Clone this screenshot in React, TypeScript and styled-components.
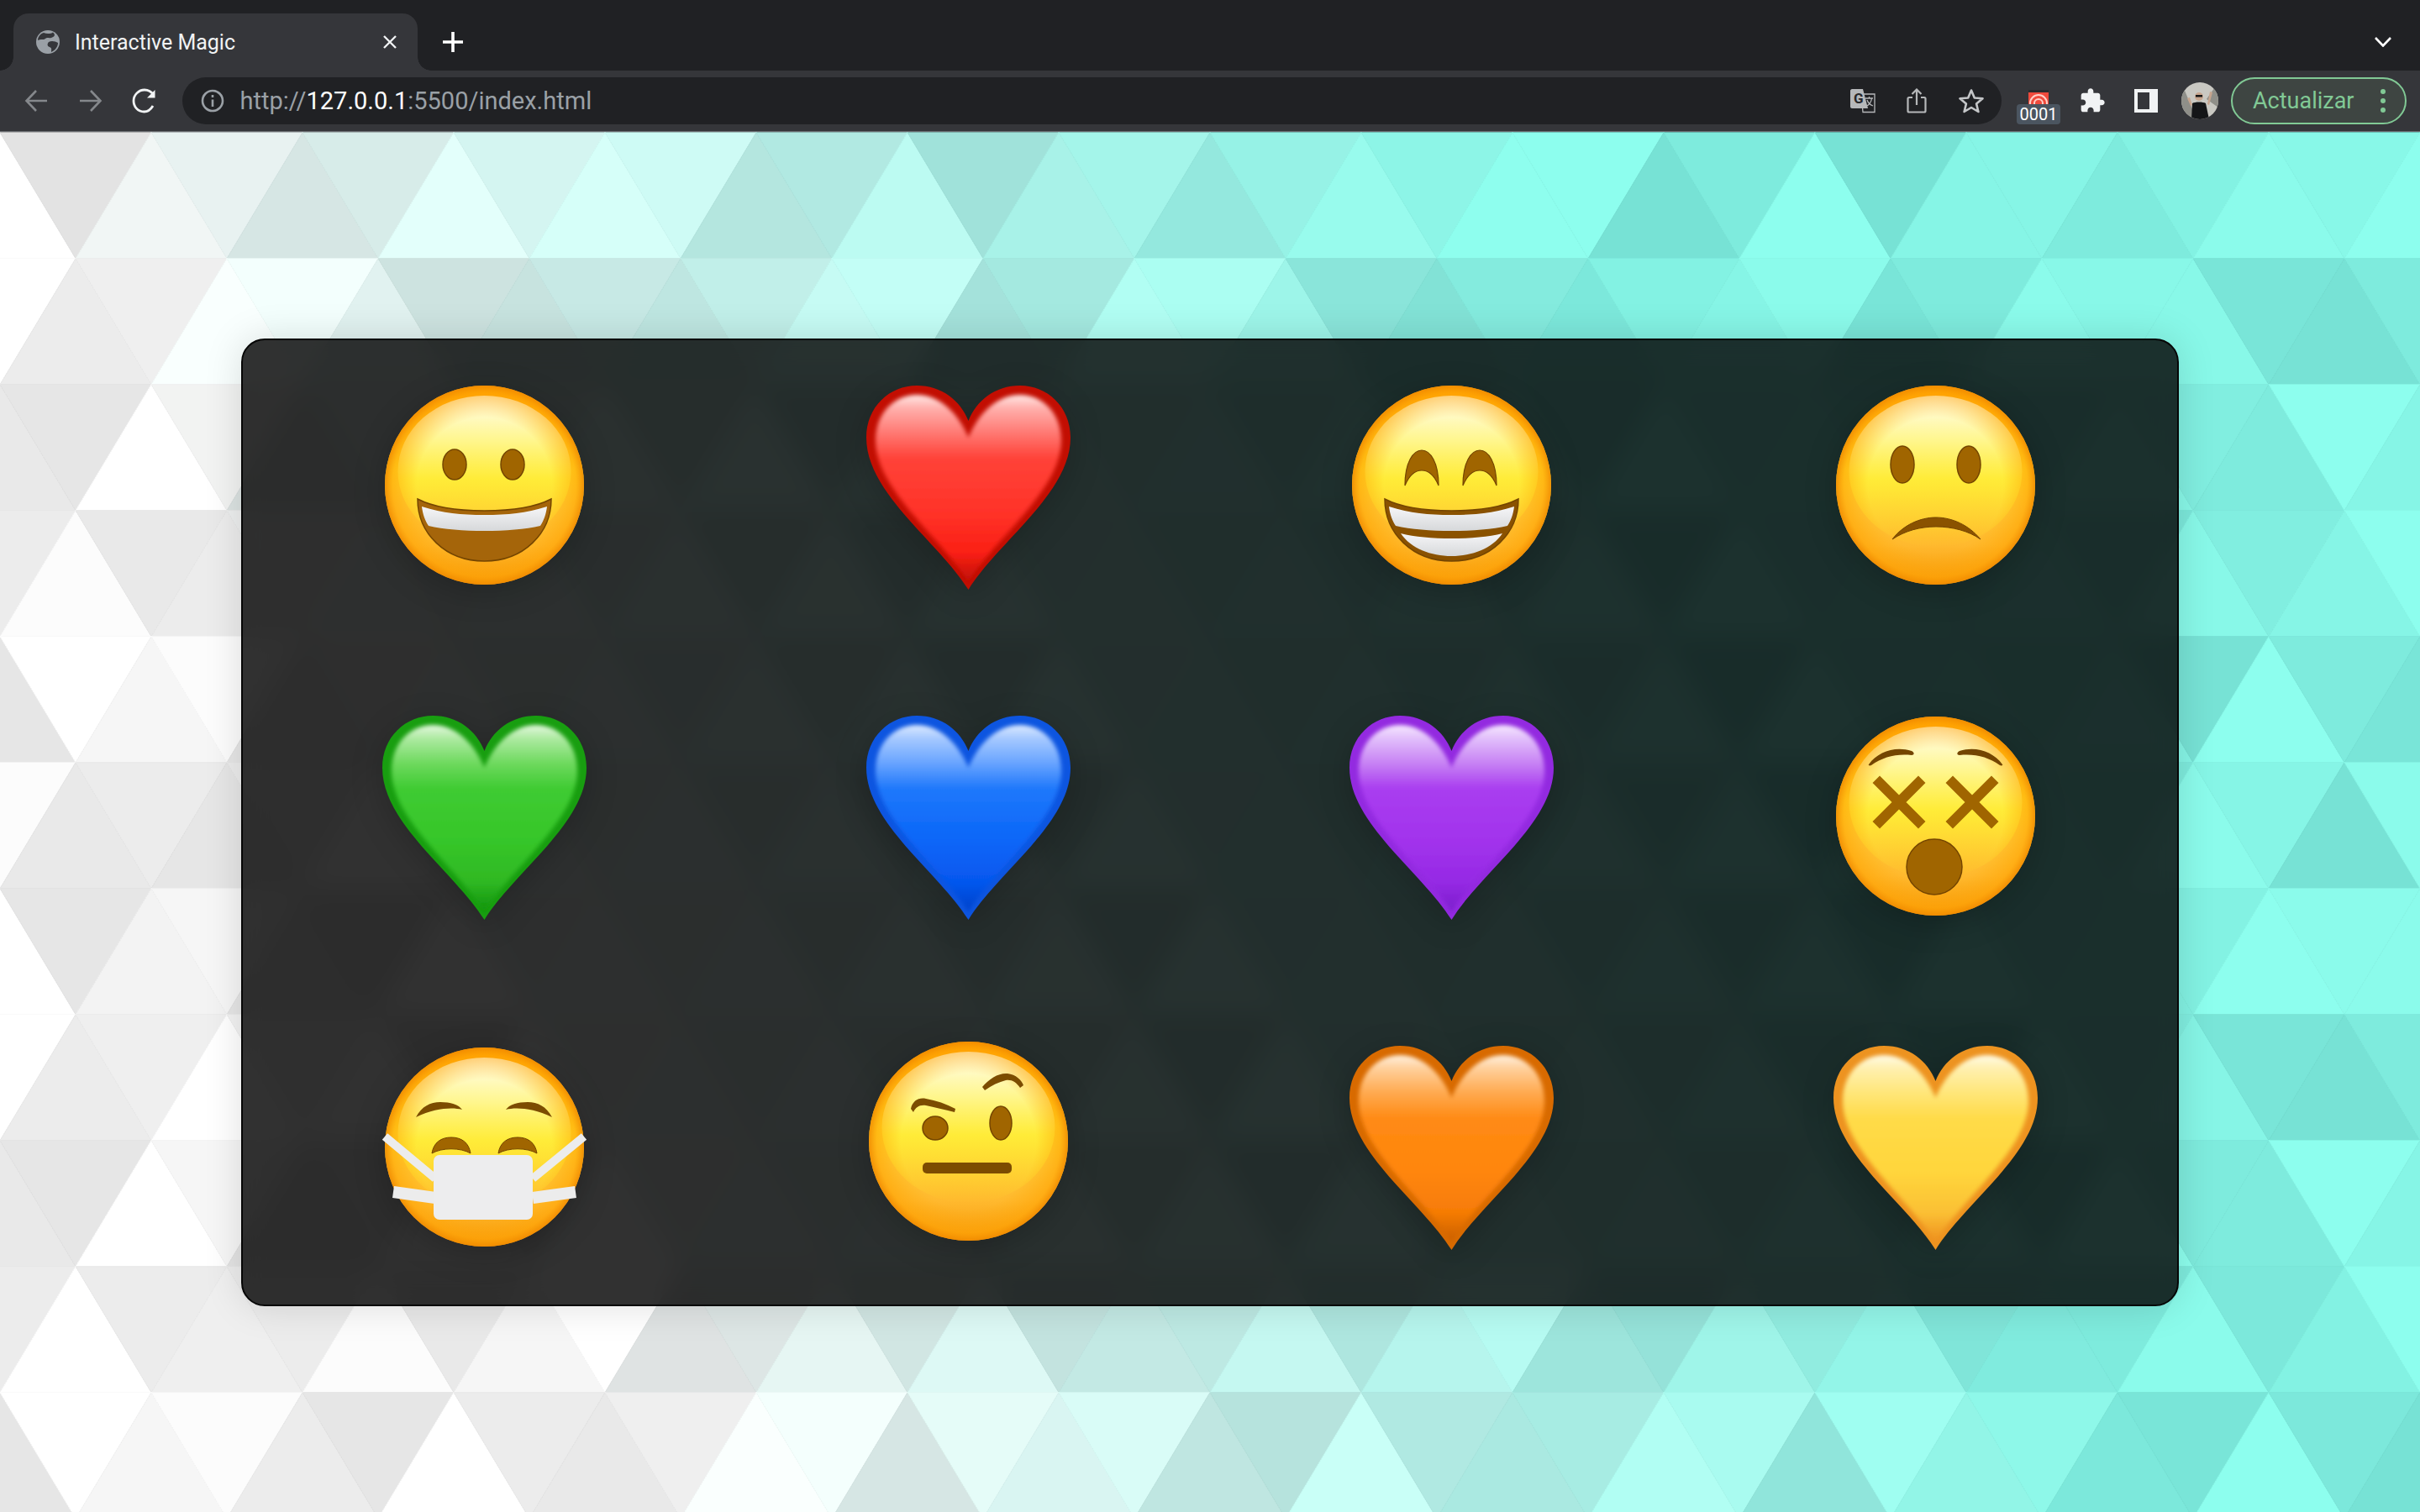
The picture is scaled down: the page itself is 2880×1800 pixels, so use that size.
import React, { useMemo } from 'react';
import styled, { createGlobalStyle } from 'styled-components';

const GlobalStyle = createGlobalStyle`
  html, body, #root {
    margin: 0;
    height: 100%;
  }
  body {
    font-family: Roboto, 'Liberation Sans', sans-serif;
    overflow: hidden;
    background: #202124;
  }
`;

const Page = styled.div`
  display: flex;
  flex-direction: column;
  width: 2880px;
  height: 1800px;
`;

const TabStrip = styled.div`
  display: flex;
  align-items: flex-end;
  flex: 0 0 84px;
  padding-left: 16px;
  background: #202124;
`;

const Tab = styled.div`
  position: relative;
  display: flex;
  align-items: center;
  width: 481px;
  height: 68px;
  padding: 0 25px 0 26px;
  box-sizing: border-box;
  background: #35363a;
  border-radius: 18px 18px 0 0;

  &::before,
  &::after {
    content: '';
    position: absolute;
    bottom: 0;
    width: 16px;
    height: 16px;
  }
  &::before {
    left: -16px;
    background: radial-gradient(circle at 0 0, transparent 15.5px, #35363a 16px);
  }
  &::after {
    right: -16px;
    background: radial-gradient(circle at 100% 0, transparent 15.5px, #35363a 16px);
  }
`;

const TabTitle = styled.span`
  flex: 1;
  margin-left: 17px;
  color: #f1f3f4;
  font-size: 25px;
  white-space: nowrap;
`;

const NewTab = styled.div`
  display: flex;
  align-items: center;
  justify-content: center;
  align-self: center;
  width: 28px;
  height: 28px;
  margin-left: 28px;
  margin-top: 16px;
`;

const TabSearch = styled.div`
  display: flex;
  align-self: center;
  margin-left: auto;
  margin-right: 34px;
  margin-top: 16px;
`;

const Toolbar = styled.div`
  display: flex;
  align-items: center;
  flex: 0 0 72px;
  padding: 0 16px 0 11px;
  background: #35363a;
  border-bottom: 1px solid #6a6c70;
`;

const IconButton = styled.div`
  display: flex;
  align-items: center;
  justify-content: center;
  flex: 0 0 64.5px;
  height: 56px;
`;

const AddressBar = styled.div`
  display: flex;
  align-items: center;
  flex: 1;
  height: 56px;
  margin: 0 12px;
  padding: 0 4px 0 22px;
  background: #202124;
  border-radius: 28px;
`;

const Url = styled.div`
  flex: 1;
  margin-left: 19px;
  color: #9aa0a6;
  font-size: 29px;
  white-space: nowrap;
`;

const Host = styled.span`
  color: #ffffff;
`;

const ToolbarAction = styled.div`
  display: flex;
  align-items: center;
  justify-content: center;
  flex: 0 0 64px;
  height: 56px;
`;

const ExtensionSlot = styled(ToolbarAction)`
  position: relative;
  align-items: flex-start;
`;

const Badge = styled.span`
  position: absolute;
  left: 6px;
  bottom: 0;
  width: 52px;
  height: 24px;
  background: #4b5560;
  border-radius: 4px;
  color: #ffffff;
  font-size: 20px;
  line-height: 25px;
  text-align: center;
`;

const UpdateButton = styled.div`
  display: flex;
  align-items: center;
  justify-content: space-between;
  width: 209px;
  height: 56px;
  margin-left: 5px;
  padding: 0 22px 0 24px;
  box-sizing: border-box;
  background: #3e4542;
  border: 2px solid #81c995;
  border-radius: 28px;
  color: #81c995;
  font-size: 27px;
`;

const Viewport = styled.main`
  position: relative;
  display: flex;
  align-items: center;
  justify-content: center;
  flex: 1;
  overflow: hidden;
`;

const Backdrop = styled.svg`
  position: absolute;
  top: 0;
  left: 0;
  width: 2880px;
  height: 1643px;
`;

const Card = styled.section`
  position: relative;
  display: grid;
  grid-template-columns: repeat(4, 1fr);
  grid-auto-rows: 393px;
  justify-items: center;
  align-items: start;
  width: 2306px;
  height: 1152px;
  padding-top: 54px;
  box-sizing: border-box;
  background: rgba(2, 2, 2, 0.815);
  backdrop-filter: blur(14px);
  border: 2px solid #060606;
  border-radius: 28px;
  box-shadow: 0 0 46px rgba(0, 0, 0, 0.13);
`;

const Emoji = styled.svg<{ $nudge?: number }>`
  display: block;
  margin-top: ${({ $nudge }) => $nudge ?? 0}px;
  filter: drop-shadow(0 8px 18px rgba(0, 0, 0, 0.2));
  overflow: visible;
`;

const SharedDefs = styled.svg`
  position: absolute;
  width: 0;
  height: 0;
`;

// the rows behind the card barely show, so their middle is just a repeating spread of tones
const middle = (k: number) =>
  Array.from({ length: 24 }, (_, i) => '2846193705'[(i * 7 + k * 3) % 10]).join('');

// tone of every triangle, left to right, 0 = dark and 9 = light
const ROWS = [
  '906513969812805625869903906635879',
  '934995002148902996103256813877103',
  '21950' + middle(2) + '4396',
  '38234' + middle(3) + '7469',
  '19681' + middle(4) + '0931',
  '82313' + middle(5) + '8608',
  '91561' + middle(6) + '5988',
  '93495' + middle(7) + '6103',
  '21960' + middle(8) + '3396',
  '393438269016170227168106361338259',
  '196831932499186810922398196721920',
];

const ROW_HEIGHT = 150;
const TRI_WIDTH = 180;

const lerp = (a: number, b: number, t: number) => a + (b - a) * t;

function toneColor(tone: number, x: number, y: number) {
  const s = Math.min(1, Math.max(0, (x - 100 - 0.47 * (y - 200)) / 1700));
  const t = tone / 9;
  const dark = [lerp(0xe3, 0x77, s), lerp(0xe3, 0xe2, s), lerp(0xe3, 0xd5, s)];
  const light = [lerp(0xff, 0x8d, s), lerp(0xff, 0xfe, s), lerp(0xff, 0xee, s)];
  return `rgb(${dark.map((d, i) => Math.round(lerp(d, light[i], t))).join(',')})`;
}

function buildTriangles() {
  const out: { points: string; fill: string }[] = [];
  ROWS.forEach((row, k) => {
    const y0 = 0.7 + k * ROW_HEIGHT;
    const y1 = y0 + ROW_HEIGHT;
    const w = TRI_WIDTH;
    for (let i = 0; i < row.length; i++) {
      let pts: number[][];
      if (k % 2 === 0) {
        const j = Math.floor(i / 2);
        pts = i % 2 === 0
          ? [[w * j, y0], [w * j - w / 2, y1], [w * j + w / 2, y1]]
          : [[w * j, y0], [w * j + w, y0], [w * j + w / 2, y1]];
      } else if (i % 2 === 1) {
        const j = (i - 1) / 2;
        pts = [[w * j + w / 2, y0], [w * j, y1], [w * j + w, y1]];
      } else {
        const j = i / 2 - 1;
        pts = [[w * j + w / 2, y0], [w * j + w * 1.5, y0], [w * j + w, y1]];
      }
      const cx = (pts[0][0] + pts[1][0] + pts[2][0]) / 3;
      out.push({
        points: pts.map((p) => p.join(',')).join(' '),
        fill: toneColor(Number(row[i]), cx, y0 + 232),
      });
    }
  });
  return out;
}

function TriangleField() {
  const triangles = useMemo(buildTriangles, []);
  return (
    <Backdrop viewBox="0 0 2880 1643" aria-hidden>
      {triangles.map((t, i) => (
        <polygon key={i} points={t.points} fill={t.fill} stroke={t.fill} strokeWidth="0.8" />
      ))}
    </Backdrop>
  );
}

const BROWN = '#a06500';
const EDGE = '#744500';

function Defs() {
  return (
    <SharedDefs aria-hidden>
      <defs>
        <linearGradient id="faceBase" x1="0" y1="0" x2="0" y2="1">
          <stop offset="0" stopColor="#ff9d00" />
          <stop offset="0.1" stopColor="#ffad0a" />
          <stop offset="0.42" stopColor="#ffdb2a" />
          <stop offset="0.62" stopColor="#ffc634" />
          <stop offset="0.8" stopColor="#ffb92e" />
          <stop offset="1" stopColor="#f69a0e" />
        </linearGradient>
        <radialGradient id="faceRim" cx="0.5" cy="0.5" r="0.5">
          <stop offset="0.68" stopColor="#ffa600" stopOpacity="0" />
          <stop offset="0.92" stopColor="#ffa200" stopOpacity="0.55" />
          <stop offset="1" stopColor="#f08a00" stopOpacity="0.9" />
        </radialGradient>
        <linearGradient id="faceGlow" x1="0" y1="0" x2="0" y2="1">
          <stop offset="0" stopColor="#fffdf0" />
          <stop offset="0.3" stopColor="#fff68c" />
          <stop offset="0.55" stopColor="#ffee3a" stopOpacity="0.9" />
          <stop offset="1" stopColor="#ffe02a" stopOpacity="0" />
        </linearGradient>
        <linearGradient id="tooth" x1="0" y1="0" x2="0" y2="1">
          <stop offset="0" stopColor="#f6f6f8" />
          <stop offset="1" stopColor="#d6d8da" />
        </linearGradient>
      </defs>
    </SharedDefs>
  );
}

function Face({ nudge, children }: { nudge?: number; children: React.ReactNode }) {
  return (
    <Emoji $nudge={nudge} width="237" height="237" viewBox="0 0 237 237">
      <circle cx="118.5" cy="118.5" r="118.5" fill="url(#faceBase)" />
      <ellipse cx="118.5" cy="102" rx="103" ry="90" fill="url(#faceGlow)" />
      <circle cx="118.5" cy="118.5" r="118.5" fill="url(#faceRim)" />
      {children}
    </Emoji>
  );
}

const MOUTH = 'M39 135C60 146 90 149 118.5 149C147 149 177 146 198 135C198 176 165 209 118.5 209C72 209 39 176 39 135Z';
const UPPER_TEETH = 'M44 144C70 152 90 154 118.5 154C147 154 167 152 193 144C192 153 189 161 185 167C150 175 87 175 52 167C48 161 45 153 44 144Z';

function Smile() {
  return (
    <Face>
      <ellipse cx="83" cy="94" rx="14" ry="18" fill={BROWN} stroke={EDGE} strokeWidth="1.5" />
      <ellipse cx="152" cy="94" rx="14" ry="18" fill={BROWN} stroke={EDGE} strokeWidth="1.5" />
      <path d={MOUTH} fill="#a5650a" stroke={EDGE} strokeWidth="1.5" />
      <path d={UPPER_TEETH} fill="url(#tooth)" />
    </Face>
  );
}

function Grin() {
  const arch = 'M-20 42C-20 14 -10 0 0 0C10 0 20 14 20 42C15 30 8 24 0 24C-8 24 -15 30 -20 42Z';
  return (
    <Face>
      <path d={arch} transform="translate(83 77)" fill={BROWN} stroke={EDGE} strokeWidth="1.2" />
      <path d={arch} transform="translate(152 77)" fill={BROWN} stroke={EDGE} strokeWidth="1.2" />
      <path d={MOUTH} fill="#8a5200" stroke={EDGE} strokeWidth="1.5" />
      <path d={UPPER_TEETH} fill="url(#tooth)" />
      <path d="M58 176C90 184 147 184 179 176C167 194 143 203 118.5 203C94 203 70 194 58 176Z" fill="url(#tooth)" />
    </Face>
  );
}

function Sad() {
  return (
    <Face>
      <ellipse cx="79" cy="94" rx="14" ry="22" fill={BROWN} stroke={EDGE} strokeWidth="1.5" />
      <ellipse cx="158" cy="94" rx="14" ry="22" fill={BROWN} stroke={EDGE} strokeWidth="1.5" />
      <path d="M67 183C80 166 100 157 119 157C138 157 158 166 172 183C158 173 138 168 119 168C100 168 82 173 67 183Z" fill="#8a5200" stroke={EDGE} strokeWidth="1" />
    </Face>
  );
}

function Dizzy() {
  const cross = (cx: number) => (
    <path
      d={`M${cx - 23} 79L${cx + 23} 125M${cx + 23} 79L${cx - 23} 125`}
      stroke={BROWN}
      strokeWidth="12"
      strokeLinecap="square"
    />
  );
  return (
    <Face nudge={1}>
      <path d="M39 57C50 42 70 35 90 41C94 43 93 46 90 46C72 44 56 48 42 58C40 59 38 58 39 57Z" fill={EDGE} />
      <path d="M198 57C187 42 167 35 147 41C143 43 144 46 147 46C165 44 181 48 195 58C197 59 199 58 198 57Z" fill={EDGE} />
      {cross(75)}
      {cross(162)}
      <circle cx="117" cy="179" r="33" fill={BROWN} stroke={EDGE} strokeWidth="1.5" />
    </Face>
  );
}

function Masked() {
  return (
    <Face nudge={2}>
      <path d="M37 83C44 70 54 65 66 65C78 65 88 68 92 74C80 71 60 72 37 83Z" fill="#7c4c00" />
      <path d="M199 83C192 70 182 65 170 65C158 65 148 68 144 74C156 71 176 72 199 83Z" fill="#7c4c00" />
      <path d="M56 126C58 113 67 107 79 107C91 107 100 113 102 126C90 119 68 119 56 126Z" fill={BROWN} stroke={EDGE} strokeWidth="1" />
      <path d="M135 126C137 113 146 107 158 107C170 107 179 113 181 126C169 119 147 119 135 126Z" fill={BROWN} stroke={EDGE} strokeWidth="1" />
      <path d="M0 106L60 156M237 106L176 156" stroke="#ececec" strokeWidth="10" />
      <path d="M10 172L60 179M227 172L176 179" stroke="#ececec" strokeWidth="14" />
      <rect x="58" y="128" width="118" height="77" rx="7" fill="#ededee" />
    </Face>
  );
}

function Skeptic() {
  return (
    <Face nudge={-5}>
      <path d="M50 80C52 70 60 66 68 68C80 70 92 74 103 80L102 84C90 81 78 78 68 76C60 75 56 78 53 84Z" fill="#7c4c00" />
      <path d="M135 54C143 44 155 37 165 38C175 39 182 46 184 52L180 55C175 48 170 45 163 46C155 48 146 52 138 58Z" fill="#7c4c00" />
      <ellipse cx="79" cy="103" rx="15" ry="14" fill={BROWN} stroke={EDGE} strokeWidth="1.5" />
      <ellipse cx="157" cy="97" rx="13" ry="20" fill={BROWN} stroke={EDGE} strokeWidth="1.5" />
      <rect x="64" y="144" width="106" height="13" rx="5" fill="#7c4c00" />
    </Face>
  );
}

interface HeartTone {
  id: string;
  rim: string;
  stops: string[];
}

const HEART_OUTER = 'M121.5 243C86 186 0 128 0 62C0 25 28 0 60 0C90 0 112 18 121.5 42C131 18 153 0 183 0C215 0 243 25 243 62C243 128 157 186 121.5 243Z';
const HEART_INNER = 'M121.5 234C92 184 11 124 11 66C11 32 34 11 60 11C88 11 110 34 121.5 62C133 34 155 11 183 11C209 11 232 32 232 66C232 124 151 184 121.5 234Z';
const HEART_OFFSETS = [0, 0.07, 0.2, 0.34, 0.62, 0.84, 1];

const RED: HeartTone = { id: 'red', rim: '#c20e02', stops: ['#ffe8e6', '#ffb0ac', '#ff7a74', '#ff4238', '#ff3329', '#fb2015', '#bf0f05'] };
const GREEN: HeartTone = { id: 'green', rim: '#189e10', stops: ['#e4f8df', '#aeeaa2', '#70da60', '#3fcb32', '#36c629', '#2fb823', '#0f920a'] };
const BLUE: HeartTone = { id: 'blue', rim: '#0d55e0', stops: ['#dceaff', '#a6c9ff', '#6aa5ff', '#1f78fb', '#0a66f8', '#0657ee', '#0041c8'] };
const PURPLE: HeartTone = { id: 'purple', rim: '#932ae0', stops: ['#f6e8ff', '#e2c0fb', '#c884f4', '#a93df0', '#a233ec', '#9529e4', '#7a1ecb'] };
const ORANGE: HeartTone = { id: 'orange', rim: '#d86a00', stops: ['#fff0de', '#ffd09c', '#ffaa50', '#ff8a14', '#ff860c', '#f67c06', '#c85e00'] };
const YELLOW: HeartTone = { id: 'yellow', rim: '#ed9320', stops: ['#fffbe6', '#fff0b0', '#ffe67a', '#ffdb48', '#ffd63c', '#fbc034', '#ee8f1e'] };

function Heart({ tone }: { tone: HeartTone }) {
  return (
    <Emoji width="243" height="243" viewBox="0 0 243 243">
      <defs>
        <linearGradient id={`heart-${tone.id}`} x1="0" y1="0" x2="0" y2="1">
          {tone.stops.map((color, i) => (
            <stop key={color} offset={HEART_OFFSETS[i]} stopColor={color} />
          ))}
        </linearGradient>
        <filter id={`soft-${tone.id}`} x="-5%" y="-5%" width="110%" height="110%">
          <feGaussianBlur stdDeviation="2.6" />
        </filter>
      </defs>
      <path d={HEART_OUTER} fill={tone.rim} />
      <path d={HEART_INNER} fill={`url(#heart-${tone.id})`} filter={`url(#soft-${tone.id})`} />
    </Emoji>
  );
}

function Globe() {
  return (
    <svg width="30" height="30" viewBox="0 0 30 30">
      <circle cx="15" cy="15" r="14" fill="#9aa0a6" />
      <path d="M10 4C14 6 19 5 21 3.5C25 7 22 9 19 10C16 11 14 9 12 11C10 13 6 11 3 13C3 9 6 5 10 4ZM16 15C19 13 24 14 27 16C27 20 24 25 19 27C19 24 20 22 17 21C14 20 14 17 16 15Z" fill="#35363a" />
    </svg>
  );
}

const ForwardFlip = styled.svg<{ $flip?: boolean }>`
  transform: ${({ $flip }) => ($flip ? 'scaleX(-1)' : 'none')};
`;

function Arrow({ flip }: { flip?: boolean }) {
  return (
    <ForwardFlip $flip={flip} width="28" height="28" viewBox="0 0 28 28" fill="none" stroke="#85888c" strokeWidth="2.6">
      <path d="M27 14H3M14 2L2.5 14L14 26" />
    </ForwardFlip>
  );
}

function Info() {
  return (
    <svg width="28" height="28" viewBox="0 0 28 28" fill="none" stroke="#9aa0a6" strokeWidth="2.6">
      <circle cx="14" cy="14" r="12" />
      <path d="M14 12.5V21M14 7V10" />
    </svg>
  );
}

function Translate() {
  return (
    <svg width="30" height="30" viewBox="0 0 30 30">
      <path d="M13 7H29V28.5H15Z" fill="#202124" stroke="#b6b8ba" strokeWidth="1.3" />
      <path d="M2 1H15L21 24H2C1 24 0 23 0 22V3C0 2 1 1 2 1Z" fill="#b6b8ba" />
      <text x="4" y="18" fontSize="17" fontWeight="700" fill="#26272a" fontFamily="Roboto, sans-serif">G</text>
      <path d="M18 12H27M22.5 10V12M20 21C23 19 25 16 25.5 12M20 14C21 17 24 20 27 21" stroke="#b6b8ba" strokeWidth="1.3" fill="none" />
    </svg>
  );
}

function Share() {
  return (
    <svg width="24" height="30" viewBox="0 0 24 30" fill="none" stroke="#b6b8ba" strokeWidth="2.2">
      <path d="M7 11H3C2 11 1.5 11.5 1.5 12.5V27C1.5 28 2 28.5 3 28.5H21C22 28.5 22.5 28 22.5 27V12.5C22.5 11.5 22 11 21 11H17" />
      <path d="M12 20V2M6.5 7L12 1.5L17.5 7" />
    </svg>
  );
}

function Star() {
  return (
    <svg width="30" height="30" viewBox="0 0 30 30" fill="none" stroke="#c4c6c8" strokeWidth="2.6" strokeLinejoin="round">
      <path d="M15 2.5L18.8 11.5L28.5 12.3L21.1 18.6L23.4 28L15 23L6.6 28L8.9 18.6L1.5 12.3L11.2 11.5Z" />
    </svg>
  );
}

const LogoMark = styled.svg`
  margin-top: 15px;
`;

function ExtensionLogo() {
  return (
    <LogoMark width="24" height="17" viewBox="0 0 24 17">
      <rect width="24" height="17" fill="#f04a3c" />
      <circle cx="12" cy="16" r="10" fill="none" stroke="#ffd0c8" strokeWidth="2" />
      <circle cx="12" cy="16" r="5" fill="none" stroke="#ffd0c8" strokeWidth="2" />
      <rect width="24" height="3" fill="#2a2b2e" />
    </LogoMark>
  );
}

function Puzzle() {
  return (
    <svg width="32" height="32" viewBox="0 0 24 24" fill="#f1f3f4">
      <path d="M20.5 11H19V7c0-1.1-.9-2-2-2h-4V3.5C13 2.12 11.88 1 10.5 1S8 2.12 8 3.5V5H4c-1.1 0-1.99.9-1.99 2v3.8H3.5c1.49 0 2.7 1.21 2.7 2.7s-1.21 2.7-2.7 2.7H2V20c0 1.1.9 2 2 2h3.8v-1.5c0-1.49 1.21-2.7 2.7-2.7 1.49 0 2.7 1.21 2.7 2.7V22H17c1.1 0 2-.9 2-2v-4h1.5c1.38 0 2.5-1.12 2.5-2.5S21.88 11 20.5 11z" />
    </svg>
  );
}

function SidePanel() {
  return (
    <svg width="28" height="28" viewBox="0 0 28 28">
      <rect width="28" height="28" fill="#f1f3f4" />
      <rect x="4" y="4" width="14" height="20" fill="#35363a" />
    </svg>
  );
}

function Avatar() {
  return (
    <svg width="44" height="44" viewBox="0 0 44 44">
      <defs>
        <clipPath id="avatar-clip">
          <circle cx="22" cy="22" r="22" />
        </clipPath>
      </defs>
      <g clipPath="url(#avatar-clip)">
        <rect width="44" height="44" fill="#c9c8c2" />
        <path d="M0 0L18 44H0ZM44 0L30 20L44 30Z" fill="#8f8f89" />
        <circle cx="21" cy="17" r="5" fill="#c7a58e" />
        <rect x="17" y="15" width="8" height="2.5" fill="#151515" />
        <path d="M12 44L13 25C16 23 26 23 29 25L33 44Z" fill="#151618" />
        <path d="M10 18L13 27L11 28L7 19ZM34 11L31 26L33 27L37 12Z" fill="#c7a58e" />
      </g>
    </svg>
  );
}

function Dots() {
  return (
    <svg width="8" height="30" viewBox="0 0 8 30" fill="#81c995">
      <circle cx="4" cy="4" r="3" />
      <circle cx="4" cy="15" r="3" />
      <circle cx="4" cy="26" r="3" />
    </svg>
  );
}

export default function App() {
  return (
    <Page>
      <GlobalStyle />
      <Defs />
      <TabStrip>
        <Tab>
          <Globe />
          <TabTitle>Interactive Magic</TabTitle>
          <svg width="16" height="16" viewBox="0 0 16 16" stroke="#f1f3f4" strokeWidth="2.4">
            <path d="M1 1L15 15M15 1L1 15" />
          </svg>
        </Tab>
        <NewTab>
          <svg width="24" height="24" viewBox="0 0 24 24" stroke="#ffffff" strokeWidth="3.6">
            <path d="M12 0V24M0 12H24" />
          </svg>
        </NewTab>
        <TabSearch>
          <svg width="20" height="12" viewBox="0 0 20 12" fill="none" stroke="#ffffff" strokeWidth="2.6">
            <path d="M1 1L10 10.5L19 1" />
          </svg>
        </TabSearch>
      </TabStrip>
      <Toolbar>
        <IconButton><Arrow /></IconButton>
        <IconButton><Arrow flip /></IconButton>
        <IconButton>
          <svg width="30" height="30" viewBox="0 0 30 30" fill="none" stroke="#f1f3f4" strokeWidth="2.8">
            <path d="M25 21C22 26 18 28 14.5 28C7 28 2 22 2 15C2 8 8 2 15 2C19 2 23 4 26 8" />
            <path d="M27.5 2V11.5H18Z" fill="#f1f3f4" stroke="none" />
          </svg>
        </IconButton>
        <AddressBar>
          <Info />
          <Url>http://<Host>127.0.0.1</Host>:5500/index.html</Url>
          <IconButton><Translate /></IconButton>
          <IconButton><Share /></IconButton>
          <IconButton><Star /></IconButton>
        </AddressBar>
        <ExtensionSlot>
          <ExtensionLogo />
          <Badge>0001</Badge>
        </ExtensionSlot>
        <ToolbarAction><Puzzle /></ToolbarAction>
        <ToolbarAction><SidePanel /></ToolbarAction>
        <ToolbarAction><Avatar /></ToolbarAction>
        <UpdateButton>
          Actualizar
          <Dots />
        </UpdateButton>
      </Toolbar>
      <Viewport>
        <TriangleField />
        <Card>
          <Smile />
          <Heart tone={RED} />
          <Grin />
          <Sad />
          <Heart tone={GREEN} />
          <Heart tone={BLUE} />
          <Heart tone={PURPLE} />
          <Dizzy />
          <Masked />
          <Skeptic />
          <Heart tone={ORANGE} />
          <Heart tone={YELLOW} />
        </Card>
      </Viewport>
    </Page>
  );
}
